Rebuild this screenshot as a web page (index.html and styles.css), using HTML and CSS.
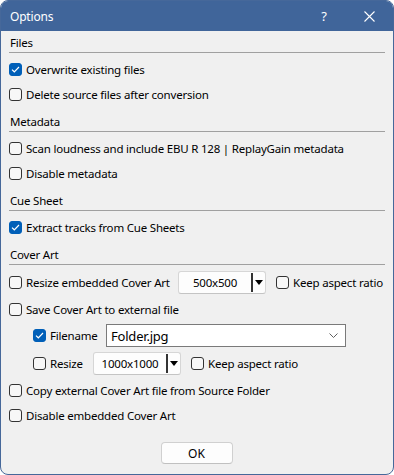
FILE: index.html
```html
<!DOCTYPE html>
<html lang="en">
<head>
    <meta charset="UTF-8">
    <title>Options</title>
    <link rel="stylesheet" href="styles.css">
</head>
<body>
    <div class="window">
        <div class="titlebar">
            <span class="title">Options</span>
            <span class="help">?</span>
            <span class="close">
                <svg width="11" height="11" viewBox="0 0 11 11"><path d="M0.5 0.5 L10.5 10.5 M10.5 0.5 L0.5 10.5" stroke="#fff" stroke-width="1.1" fill="none"/></svg>
            </span>
        </div>

        <div class="content">
            <div class="group-title first">Files</div>
            <div class="row">
                <span class="box checked"><svg width="9" height="7" viewBox="0 0 9 7"><path d="M1 3.6 L3.3 5.8 L8 1" stroke="#fff" stroke-width="1.2" fill="none"/></svg></span>
                <span>Overwrite existing files</span>
            </div>
            <div class="row">
                <span class="box"></span>
                <span>Delete source files after conversion</span>
            </div>

            <div class="group-title">Metadata</div>
            <div class="row">
                <span class="box"></span>
                <span>Scan loudness and include EBU R 128 | ReplayGain metadata</span>
            </div>
            <div class="row">
                <span class="box"></span>
                <span>Disable metadata</span>
            </div>

            <div class="group-title">Cue Sheet</div>
            <div class="row">
                <span class="box checked"><svg width="9" height="7" viewBox="0 0 9 7"><path d="M1 3.6 L3.3 5.8 L8 1" stroke="#fff" stroke-width="1.2" fill="none"/></svg></span>
                <span>Extract tracks from Cue Sheets</span>
            </div>

            <div class="group-title">Cover Art</div>
            <div class="row row-tall">
                <span class="box"></span>
                <span class="label-wide">Resize embedded Cover Art</span>
                <div class="size-combo">
                    <span class="size-value">500x500</span>
                    <span class="size-sep"></span>
                    <span class="size-arrow"></span>
                </div>
                <span class="box box-after"></span>
                <span>Keep aspect ratio</span>
            </div>
            <div class="row row-save">
                <span class="box"></span>
                <span>Save Cover Art to external file</span>
            </div>
            <div class="row row-tall sub">
                <span class="box checked"><svg width="9" height="7" viewBox="0 0 9 7"><path d="M1 3.6 L3.3 5.8 L8 1" stroke="#fff" stroke-width="1.2" fill="none"/></svg></span>
                <span class="label-filename">Filename</span>
                <div class="file-combo">
                    <span>Folder.jpg</span>
                    <svg width="9" height="5" viewBox="0 0 9 5"><path d="M0.5 0.5 L4.5 4.5 L8.5 0.5" stroke="#606060" stroke-width="1" fill="none"/></svg>
                </div>
            </div>
            <div class="row row-sub2 sub">
                <span class="box"></span>
                <span class="label-resize">Resize</span>
                <div class="size-combo">
                    <span class="size-value">1000x1000</span>
                    <span class="size-sep"></span>
                    <span class="size-arrow"></span>
                </div>
                <span class="box box-after"></span>
                <span>Keep aspect ratio</span>
            </div>
            <div class="row row-copy">
                <span class="box"></span>
                <span>Copy external Cover Art file from Source Folder</span>
            </div>
            <div class="row">
                <span class="box"></span>
                <span>Disable embedded Cover Art</span>
            </div>

            <div class="footer">
                <button class="ok-button">OK</button>
            </div>
        </div>
    </div>
</body>
</html>
```

FILE: styles.css
```css
body {
    margin: 0;
    padding: 0;
    background-color: #fff;
    font-family: 'Noto Sans', 'Liberation Sans', sans-serif;
    font-size: 11.5px;
    letter-spacing: -0.2px;
    color: #000;
}

.window {
    width: 394px;
    height: 475px;
    box-sizing: border-box;
    border: 1px solid #46689a;
    border-radius: 8px;
    background-color: #f0f0f0;
    overflow: hidden;
}

.titlebar {
    height: 30px;
    background-color: #40659a;
    color: #fff;
    display: flex;
    align-items: center;
    padding-left: 9px;
}

.title {
    flex: 1;
    font-size: 12px;
}

.help {
    width: 12px;
    text-align: center;
    margin-right: 34px;
    font-size: 13px;
}

.close {
    display: flex;
    margin-right: 18px;
}

.content {
    padding: 0 8px;
}

.group-title {
    line-height: 16px;
    margin-top: 7px;
    padding: 0 0 1px 1px;
    border-bottom: 1px solid #a0a0a0;
    margin-bottom: 4px;
}

.group-title.first {
    margin-top: 4px;
}

.row {
    height: 25px;
    display: flex;
    align-items: center;
    white-space: nowrap;
}

.row-tall {
    height: 27px;
}

.row-save {
    height: 26px;
}

.row-sub2 {
    height: 28px;
}

.row-copy {
    height: 26px;
}

.sub {
    padding-left: 24px;
}

.box {
    width: 13px;
    height: 13px;
    box-sizing: border-box;
    border: 1px solid #333;
    border-radius: 3px;
    background-color: #f7f7f7;
    margin-right: 4px;
    flex-shrink: 0;
    display: flex;
    align-items: center;
    justify-content: center;
}

.box.checked {
    background-color: #005fb8;
    border-color: #005fb8;
}

.box-after {
    margin-left: 10px;
}

.label-wide {
    width: 152px;
}

.label-filename {
    width: 56px;
}

.label-resize {
    width: 43px;
}

.size-combo {
    width: 88px;
    height: 23px;
    box-sizing: border-box;
    border: 1px solid #d6d6d6;
    border-bottom-color: #c4c4c4;
    border-radius: 3px;
    background-color: #fdfdfd;
    display: flex;
    align-items: center;
}

.size-value {
    flex: 1;
    text-align: center;
}

.size-sep {
    width: 2px;
    height: 19px;
    background-color: #333;
}

.size-arrow {
    width: 0;
    height: 0;
    border-left: 4px solid transparent;
    border-right: 4px solid transparent;
    border-top: 5px solid #000;
    margin: 0 2px 0 2px;
}

.file-combo {
    width: 240px;
    height: 23px;
    box-sizing: border-box;
    border: 1px solid #7a7a7a;
    background-color: #fff;
    display: flex;
    align-items: center;
    justify-content: space-between;
    padding: 0 7px 0 4px;
    font-size: 13px;
}

.footer {
    display: flex;
    justify-content: center;
    margin-top: 14px;
}

.ok-button {
    width: 72px;
    height: 22px;
    box-sizing: border-box;
    background-color: #fdfdfd;
    border: 1px solid #d0d0d0;
    border-bottom-color: #c0c0c0;
    border-radius: 4px;
    font-family: 'Noto Sans', 'Liberation Sans', sans-serif;
    font-size: 12px;
    color: #000;
    padding: 0;
    margin-left: -1px;
}
```
